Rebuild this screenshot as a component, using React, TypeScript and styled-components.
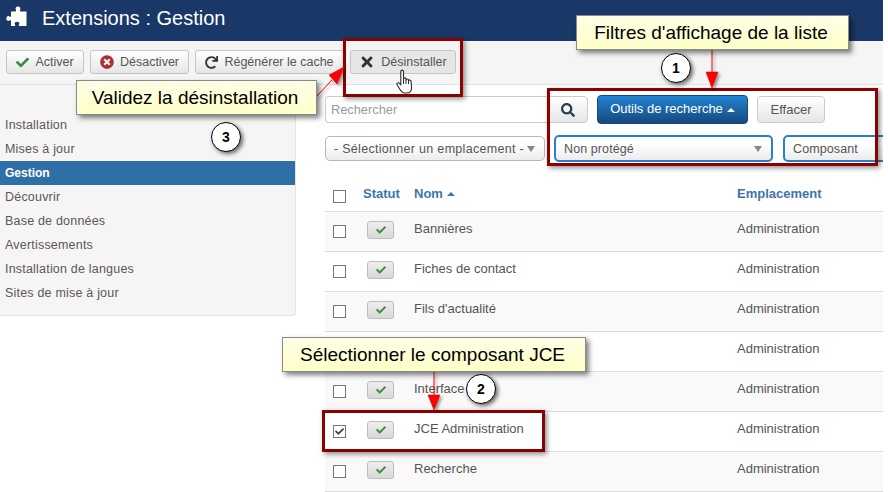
import React from "react";
import styled, { createGlobalStyle } from "styled-components";
import { FaCheck, FaTimes, FaTimesCircle, FaRedo, FaSearch } from "react-icons/fa";

const Global = createGlobalStyle`
  html, body { margin: 0; padding: 0; background: #fff; }
  body { font-family: "Liberation Sans", Arial, sans-serif; font-size: 13px; color: #555; }
`;

const Page = styled.div`
  position: relative;
  width: 883px;
  height: 492px;
  overflow: hidden;
  background: #fff;
`;

const Header = styled.header`
  height: 41px;
  background: #1a3867;
  display: flex;
  align-items: flex-start;
  padding: 6px 0 0 6px;
  box-sizing: border-box;
  gap: 15px;
  color: #fff;
`;

const Title = styled.h1`
  margin: -6px 0 0;
  font-size: 20px;
  font-weight: 400;
  line-height: 36px;
  color: #fff;
`;

const Toolbar = styled.div`
  background: #f5f5f5;
  border-bottom: 1px solid #e2e2e2;
  display: flex;
  align-items: flex-start;
  padding: 9px 0 0 6px;
  box-sizing: border-box;
  height: 44px;
  gap: 6px;
`;

const ToolButton = styled.button<{ $w: number; $active?: boolean }>`
  width: ${(p) => p.$w}px;
  height: 24px;
  box-sizing: border-box;
  border: 1px solid #c4c4c4;
  border-radius: 3px;
  background: ${(p) => (p.$active ? "#e6e6e6" : "linear-gradient(#ffffff, #e6e6e6)")};
  color: #555;
  font: 12.5px "Liberation Sans", Arial, sans-serif;
  display: flex;
  align-items: center;
  justify-content: center;
  gap: 6px;
  padding: 0;
`;

const Body = styled.div`
  display: flex;
  align-items: flex-start;
`;

const Sidebar = styled.nav`
  width: 296px;
  flex: none;
  box-sizing: border-box;
  background: #f5f5f5;
  border-right: 1px solid #e3e3e3;
  border-bottom: 1px solid #e3e3e3;
  border-bottom-right-radius: 4px;
  padding: 28px 0 10px;
`;

const SideItem = styled.div<{ $active?: boolean }>`
  height: 24px;
  line-height: 24px;
  padding-left: 5px;
  font-size: ${(p) => (p.$active ? 12 : 12.5)}px;
  letter-spacing: ${(p) => (p.$active ? 0 : 0.2)}px;
  color: ${(p) => (p.$active ? "#fff" : "#5f5555")};
  font-weight: ${(p) => (p.$active ? 700 : 400)};
  background: ${(p) => (p.$active ? "#2f6fa7" : "transparent")};
`;

const Main = styled.main`
  flex: none;
  width: 558px;
  margin-left: 29px;
`;

const SearchRow = styled.div`
  display: flex;
  align-items: flex-start;
  padding-top: 11px;
  height: 40px;
`;

const SearchInput = styled.div`
  width: 222px;
  height: 27px;
  box-sizing: border-box;
  border: 1px solid #ccc;
  border-radius: 4px 0 0 4px;
  border-right: 0;
  color: #999;
  font-size: 12.8px;
  line-height: 26px;
  padding-left: 5px;
  background: #fff;
`;

const SearchButton = styled.div`
  width: 41px;
  height: 27px;
  box-sizing: border-box;
  border: 1px solid #ccc;
  border-radius: 0 4px 4px 0;
  background: linear-gradient(#fff, #e6e6e6);
  display: flex;
  align-items: center;
  justify-content: center;
  color: #2a3d52;
  font-size: 14px;
`;

const BlueButton = styled.div`
  width: 151px;
  height: 29px;
  margin: -1px 0 0 9px;
  box-sizing: border-box;
  border: 1px solid #15497c;
  border-radius: 4px;
  background: linear-gradient(#2384d3, #15497c);
  color: #fff;
  font-size: 13px;
  line-height: 25px;
  display: flex;
  align-items: flex-start;
  justify-content: center;
  gap: 4px;
`;

const CaretUp = styled.span<{ $color: string }>`
  width: 0;
  height: 0;
  align-self: center;
  border-left: 4px solid transparent;
  border-right: 4px solid transparent;
  border-bottom: 4px solid ${(p) => p.$color};
`;

const ClearButton = styled.div`
  width: 68px;
  height: 27px;
  margin-left: 9px;
  box-sizing: border-box;
  border: 1px solid #ccc;
  border-radius: 4px;
  background: linear-gradient(#fff, #e6e6e6);
  color: #555;
  font-size: 13px;
  display: flex;
  align-items: center;
  justify-content: center;
`;

const FilterRow = styled.div`
  display: flex;
  height: 46px;
  align-items: flex-start;
`;

const Select = styled.div<{ $w: number; $focus?: boolean; $gap: number; $spacing: number }>`
  width: ${(p) => p.$w}px;
  flex: none;
  margin: ${(p) => (p.$focus ? "-1px" : "0")} ${(p) => p.$gap}px 0 0;
  height: ${(p) => (p.$focus ? 27 : 25)}px;
  box-sizing: border-box;
  border: ${(p) => (p.$focus ? "2px solid #2a80c8" : "1px solid #b8b8b8")};
  border-radius: 5px;
  background: linear-gradient(#ffffff 30%, #ececec);
  color: #555;
  font-size: 12.5px;
  letter-spacing: ${(p) => p.$spacing}px;
  white-space: nowrap;
  display: flex;
  align-items: center;
  justify-content: space-between;
  padding: 0 9px 0 8px;
`;

const CaretDown = styled.span`
  width: 0;
  height: 0;
  flex: none;
  border-left: 4px solid transparent;
  border-right: 4px solid transparent;
  border-top: 6px solid #888;
`;

const Row = styled.div<{ $odd?: boolean; $head?: boolean }>`
  display: grid;
  grid-template-columns: 38px 51px 323px 1fr;
  height: ${(p) => (p.$head ? 30 : 40)}px;
  box-sizing: border-box;
  border-bottom: 1px solid #ddd;
  background: ${(p) => (p.$odd ? "#f9f9f9" : "#fff")};
  align-items: start;
  padding-top: ${(p) => (p.$head ? 3 : 9)}px;
`;

const Box = styled.span<{ $head?: boolean }>`
  width: 13px;
  height: 13px;
  margin: ${(p) => (p.$head ? "5px 0 0 8px" : "4px 0 0 8px")};
  box-sizing: border-box;
  border: 1px solid #777;
  background: #fff;
  display: flex;
  align-items: center;
  justify-content: center;
  color: #444;
`;

const HeadCell = styled.span`
  color: #3f74ab;
  font-weight: 700;
  font-size: 13px;
  line-height: 17px;
  display: flex;
  align-items: center;
  gap: 4px;
`;

const StatusButton = styled.span`
  width: 27px;
  height: 18px;
  box-sizing: border-box;
  border: 1px solid #bdbdbd;
  border-radius: 3px;
  background: linear-gradient(#eeeeee, #d8d8d8);
  display: flex;
  align-items: center;
  justify-content: center;
  color: #3f8a3f;
  font-size: 10px;
`;

const StatusCell = styled.span`
  padding-left: 4px;
`;

const Name = styled.span`
  font-size: 13px;
  line-height: 16px;
  color: #555;
`;

const Callout = styled.div<{ $x: number; $y: number; $w: number; $h: number }>`
  position: absolute;
  left: ${(p) => p.$x}px;
  top: ${(p) => p.$y}px;
  width: ${(p) => p.$w}px;
  height: ${(p) => p.$h}px;
  box-sizing: border-box;
  border: 1px solid #8a8a8a;
  background: linear-gradient(#fffee6, #ffffc8);
  box-shadow: 3px 3px 5px rgba(0, 0, 0, 0.5);
  color: #000;
  font-size: 19px;
  padding-right: 3px;
  display: flex;
  align-items: center;
  justify-content: center;
  white-space: nowrap;
`;

const Frame = styled.div<{ $x: number; $y: number; $w: number; $h: number }>`
  position: absolute;
  left: ${(p) => p.$x}px;
  top: ${(p) => p.$y}px;
  width: ${(p) => p.$w}px;
  height: ${(p) => p.$h}px;
  box-sizing: border-box;
  border: 3px solid #8b0000;
  box-shadow: 2px 2px 5px rgba(0, 0, 0, 0.45);
`;

const Badge = styled.div<{ $x: number; $y: number }>`
  position: absolute;
  left: ${(p) => p.$x - 15}px;
  top: ${(p) => p.$y - 15}px;
  width: 30px;
  height: 30px;
  box-sizing: border-box;
  border: 1.5px solid #000;
  border-radius: 50%;
  background: #fff;
  box-shadow: 2px 2px 4px rgba(0, 0, 0, 0.6);
  color: #000;
  font-weight: 700;
  font-size: 14px;
  display: flex;
  align-items: center;
  justify-content: center;
`;

const Overlay = styled.svg`
  position: absolute;
  left: 0;
  top: 0;
  pointer-events: none;
`;

const HandSpot = styled.div`
  position: absolute;
  left: 396px;
  top: 69px;
  line-height: 0;
`;

const Puzzle = () => (
  <svg width="21" height="21" viewBox="0 0 21 21" fill="#fff">
    <path d="M12 0.5c2 0 3 1.6 2.2 3-.4.8-.4 1.4.2 1.9H20.500V20H13c-.5-.4-.3-1 .1-1.500.9-1.400-.3-2.800-2.100-2.800s-3 1.400-2.100 2.800c.4.500.6 1.100.1 1.500H5V14.500c-.5-.5-1.100-.3-1.600.1C2 15.500.3 14.400.3 12.500s1.700-3 3.100-2.100c.5.400 1.100.6 1.600.1V5.400h4.600c.6-.5.6-1.100.2-1.900C9 2.100 10 .5 12 .5z" />
  </svg>
);

const Hand = () => (
  <svg width="18" height="25" viewBox="0 0 18 25">
    <path
      d="M4.800 2.500C4.800.7 7.500.7 7.500 2.500V10C7.500 8.500 10 8.500 10 10V11C10 9.600 12.500 9.600 12.500 11V12C12.500 10.700 15 10.700 15 12.200L15.600 18.500C15.600 21.800 13.800 24 10.500 24H8.800C6.300 24 5.200 22.300 3.800 20.200L1.200 16C.2 14.300 2.300 13 3.600 14.500L4.800 16Z"
      fill="#fff"
      stroke="#2a2a2a"
      strokeWidth="1.100"
      strokeLinejoin="round"
    />
    <path d="M7.500 10V15M10 11V15M12.500 12V15" stroke="#2a2a2a" strokeWidth="1" fill="none" />
  </svg>
);

const items = [
  "Installation",
  "Mises à jour",
  "Gestion",
  "Découvrir",
  "Base de données",
  "Avertissements",
  "Installation de langues",
  "Sites de mise à jour",
];

const rows = [
  "Bannières",
  "Fiches de contact",
  "Fils d'actualité",
  "",
  "Interface",
  "JCE Administration",
  "Recherche",
];

export default function App() {
  return (
    <Page>
      <Global />
      <Header>
        <Puzzle />
        <Title>Extensions : Gestion</Title>
      </Header>
      <Toolbar>
        <ToolButton $w={78}>
          <FaCheck size={13} color="#3f8a3f" />
          Activer
        </ToolButton>
        <ToolButton $w={99}>
          <FaTimesCircle size={14} color="#a83232" />
          Désactiver
        </ToolButton>
        <ToolButton $w={149}>
          <FaRedo size={13} color="#333" />
          Régénérer le cache
        </ToolButton>
        <ToolButton $w={106} $active>
          <FaTimes size={16} color="#333" />
          Désinstaller
        </ToolButton>
      </Toolbar>
      <Body>
        <Sidebar>
          {items.map((t) => (
            <SideItem key={t} $active={t === "Gestion"}>
              {t}
            </SideItem>
          ))}
        </Sidebar>
        <Main>
          <SearchRow>
            <SearchInput>Rechercher</SearchInput>
            <SearchButton>
              <FaSearch />
            </SearchButton>
            <BlueButton>
              Outils de recherche <CaretUp $color="#fff" />
            </BlueButton>
            <ClearButton>Effacer</ClearButton>
          </SearchRow>
          <FilterRow>
            <Select $w={220} $gap={9} $spacing={0.3}>
              - Sélectionner un emplacement - <CaretDown />
            </Select>
            <Select $w={219} $gap={10} $spacing={0.1} $focus>
              Non protégé <CaretDown />
            </Select>
            <Select $w={200} $gap={0} $spacing={0.1} $focus>
              Composant <CaretDown />
            </Select>
          </FilterRow>
          <Row $head>
            <Box $head />
            <HeadCell>Statut</HeadCell>
            <HeadCell>
              Nom <CaretUp $color="#3f74ab" />
            </HeadCell>
            <HeadCell>Emplacement</HeadCell>
          </Row>
          {rows.map((name, i) => (
            <Row key={i} $odd={i % 2 === 0}>
              <Box>{name.startsWith("JCE") && <FaCheck size={9} />}</Box>
              <StatusCell>
                <StatusButton>
                  <FaCheck />
                </StatusButton>
              </StatusCell>
              <Name>{name}</Name>
              <Name>Administration</Name>
            </Row>
          ))}
        </Main>
      </Body>

      <Frame $x={343} $y={38} $w={120} $h={59} />
      <Frame $x={547} $y={88} $w={331} $h={78} />
      <Frame $x={322} $y={410} $w={223} $h={42} />

      <Overlay width="883" height="492" viewBox="0 0 883 492">
        <defs>
          <filter id="s" x="-50%" y="-50%" width="200%" height="200%">
            <feDropShadow dx="2" dy="2" stdDeviation="1.500" floodColor="#000" floodOpacity="0.4" />
          </filter>
        </defs>
        <g fill="#f00" stroke="#c00" strokeWidth="0.5" filter="url(#s)">
          <line x1="712" y1="50" x2="712" y2="74" stroke="#e00" strokeWidth="1" />
          <polygon points="706,72 718,72 712,88" />
          <line x1="434" y1="372" x2="434" y2="396" stroke="#e00" strokeWidth="1" />
          <polygon points="428,395 440,395 434,410" />
          <line x1="316" y1="97" x2="332" y2="80" stroke="#e00" strokeWidth="1" />
          <polygon points="344,67 329,75 337,84" />
        </g>
      </Overlay>

      <Callout $x={76} $y={80} $w={241} $h={35}>
        Validez la désinstallation
      </Callout>
      <Callout $x={576} $y={15} $w={273} $h={35}>
        Filtres d'affichage de la liste
      </Callout>
      <Callout $x={282} $y={337} $w={304} $h={35}>
        Sélectionner le composant JCE
      </Callout>

      <Badge $x={226} $y={137}>3</Badge>
      <Badge $x={676} $y={68}>1</Badge>
      <Badge $x={481} $y={389}>2</Badge>

      <HandSpot>
        <Hand />
      </HandSpot>
    </Page>
  );
}
